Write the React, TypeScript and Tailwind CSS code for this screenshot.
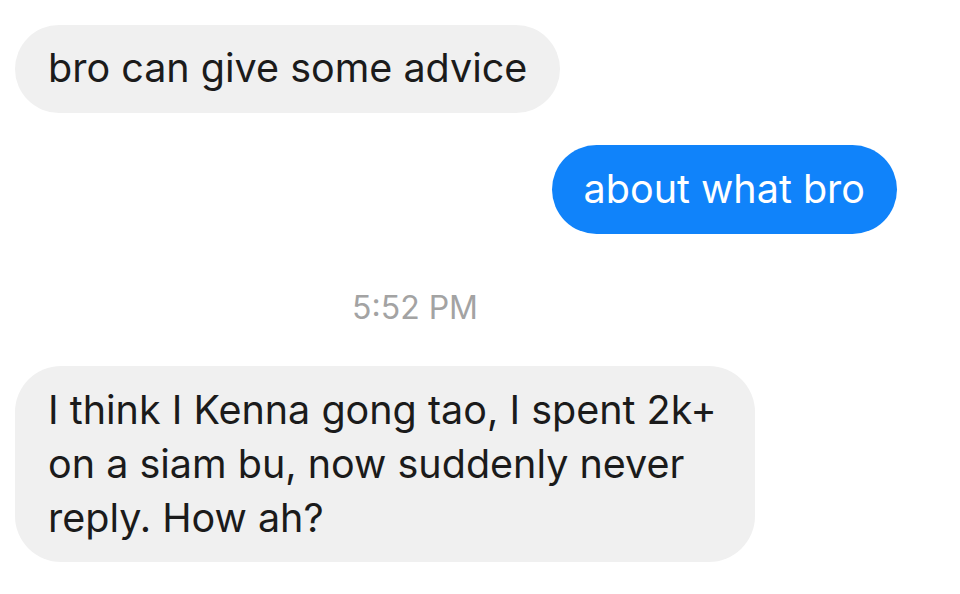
export default function App() {
  return (
    <div className="flex h-[594px] w-[960px] flex-col bg-white pt-[25px] font-['Inter',sans-serif] text-[39.5px] text-[#1b1b1b]">
      <div className="ml-[15px] flex h-[88px] w-fit items-center rounded-full bg-[#f0f0f0] px-[33px]">
        bro can give some advice
      </div>
      <div className="mr-[63px] mt-[32px] flex h-[89px] w-fit items-center self-end rounded-full bg-[#1083fa] px-[32px] text-white">
        about what bro
      </div>
      <div className="mt-[50px] flex justify-center pr-[130px] text-[32px] text-[#a3a3a3]">5:52 PM</div>
      <div className="ml-[15px] mt-[34px] w-[740px] rounded-[46px] bg-[#f0f0f0] px-[33px] py-[17px] leading-[54px]">
        I think I Kenna gong tao, I spent 2k+ on a siam bu, now suddenly never reply. How ah?
      </div>
    </div>
  );
}
